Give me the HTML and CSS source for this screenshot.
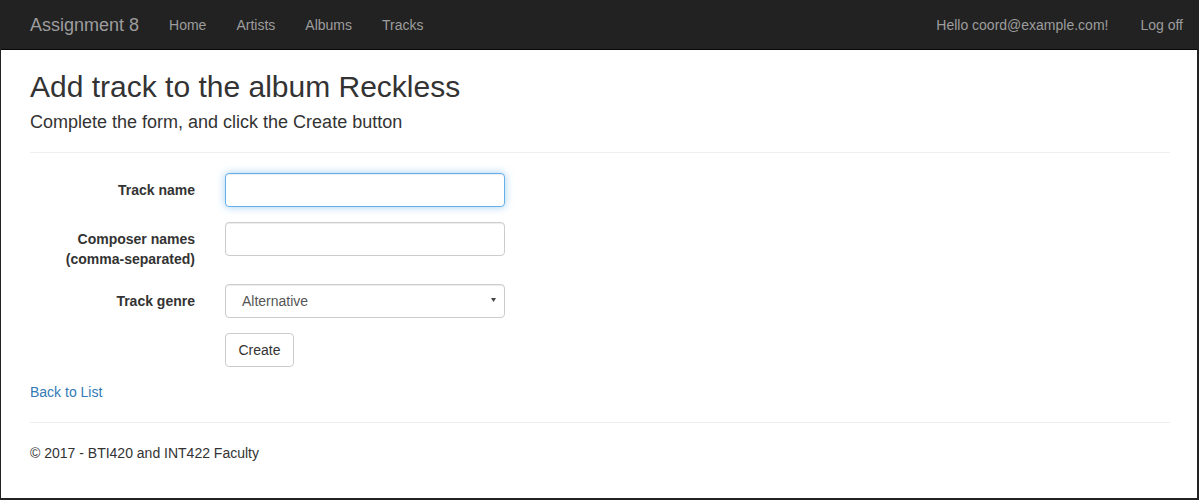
FILE: index.html
```html
<!DOCTYPE html>
<html lang="en">
<head>
<meta charset="utf-8">
<title>Add track</title>
<link rel="stylesheet" href="styles.css">
</head>
<body>
<div class="frame">
  <nav class="navbar">
    <div class="container nav-inner">
      <a class="brand" href="#">Assignment 8</a>
      <ul class="nav">
        <li><a href="#">Home</a></li>
        <li><a href="#">Artists</a></li>
        <li><a href="#">Albums</a></li>
        <li><a href="#">Tracks</a></li>
      </ul>
      <ul class="nav nav-right">
        <li><a href="#">Hello coord@example.com!</a></li>
        <li><a href="#">Log off</a></li>
      </ul>
    </div>
  </nav>
  <main class="container body-content">
    <h2>Add track to the album Reckless</h2>
    <h4>Complete the form, and click the Create button</h4>
    <hr>
    <form class="form-horizontal">
      <div class="form-group">
        <label class="control-label">Track name</label>
        <div class="control"><input type="text" class="form-control focus"></div>
      </div>
      <div class="form-group">
        <label class="control-label">Composer names (comma-separated)</label>
        <div class="control"><input type="text" class="form-control"></div>
      </div>
      <div class="form-group">
        <label class="control-label">Track genre</label>
        <div class="control">
          <div class="select-wrap">
            <select class="form-control select"><option>Alternative</option></select>
            <svg class="arrow" width="5" height="4" viewBox="0 0 5 4"><path d="M0 0 L5 0 L2.5 4 Z" fill="#444"/></svg>
          </div>
        </div>
      </div>
      <div class="form-group">
        <label class="control-label"></label>
        <div class="control"><button type="button" class="btn">Create</button></div>
      </div>
    </form>
    <div class="back"><a href="#">Back to List</a></div>
    <hr class="foot-hr">
    <footer><p>© 2017 - BTI420 and INT422 Faculty</p></footer>
  </main>
</div>
</body>
</html>
```
FILE: styles.css
```css
* { box-sizing: border-box; }
html, body { margin: 0; padding: 0; }
body {
  font-family: "Liberation Sans", Arial, Helvetica, sans-serif;
  font-size: 14px;
  line-height: 20px;
  color: #333;
  background: #fff;
}
.frame {
  height: 500px;
  width: 1199px;
  border-left: 1px solid #222;
  border-right: 2px solid #222;
  border-bottom: 2px solid #222;
  overflow: hidden;
}
.container {
  width: 1170px;
  margin-left: 14px;
  padding: 0 15px;
}
.navbar {
  background: #222;
  border-bottom: 1px solid #080808;
  height: 50px;
  margin-left: -1px;
  margin-right: -2px;
}
.nav-inner {
  display: flex;
  align-items: flex-start;
  margin-left: 15px;
}
.brand {
  color: #9d9d9d;
  font-size: 18px;
  line-height: 20px;
  padding: 15px 15px 14px 0;
  text-decoration: none;
}
.nav {
  list-style: none;
  margin: 0;
  padding: 0;
  display: flex;
}
.nav a {
  display: block;
  padding: 15px 15px 14px;
  color: #9d9d9d;
  text-decoration: none;
}
.nav-right {
  margin-left: auto;
  margin-right: -13px;
}
.nav-right li:first-child a { padding-right: 17px; }
.nav-right li:last-child a { padding-right: 0; }
.body-content { padding-top: 20px; }
h2 {
  font-size: 30px;
  font-weight: 500;
  line-height: 33px;
  margin: 0 0 9px;
}
h4 {
  font-size: 18px;
  font-weight: 500;
  line-height: 20px;
  margin: 0 0 20px;
}
hr {
  border: 0;
  border-top: 1px solid #eee;
  margin: 0 0 20px;
}
.form-group {
  display: flex;
  margin-bottom: 15px;
}
.control-label {
  width: 165px;
  text-align: right;
  font-weight: bold;
  padding-top: 7px;
  margin-right: 30px;
}
.control { width: 280px; }
.form-control {
  display: block;
  width: 280px;
  height: 34px;
  padding: 6px 12px;
  font: inherit;
  font-size: 14px;
  line-height: 20px;
  color: #555;
  background: #fff;
  border: 1px solid #ccc;
  border-radius: 4px;
  box-shadow: inset 0 1px 1px rgba(0,0,0,.075);
  outline: none;
}
.form-control.focus {
  border-color: #66afe9;
  box-shadow: inset 0 1px 1px rgba(0,0,0,.075), 0 0 8px rgba(102,175,233,.6);
}
.select-wrap { position: relative; }
.select {
  -webkit-appearance: none;
  appearance: none;
  padding-left: 16px;
}
.arrow {
  position: absolute;
  right: 9px;
  top: 14px;
}
.btn {
  font: inherit;
  font-size: 14px;
  line-height: 20px;
  color: #333;
  background: #fff;
  border: 1px solid #ccc;
  border-radius: 4px;
  padding: 6px 12px;
  height: 34px;
  width: 69px;
}
.back { line-height: 20px; }
.back a { color: #337ab7; text-decoration: none; }
.foot-hr { margin-top: 20px; }
footer p { margin: 0 0 10px; }
```
